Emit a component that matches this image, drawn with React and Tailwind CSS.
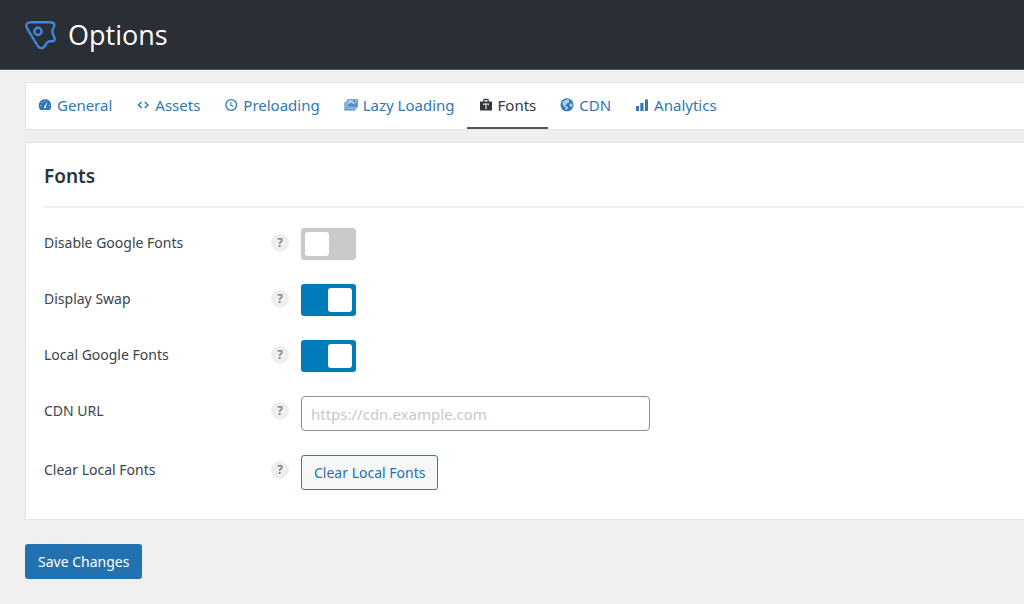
import { useState } from 'react'

const TABS = [
  { id: 'general', label: 'General', icon: GaugeIcon },
  { id: 'assets', label: 'Assets', icon: CodeIcon },
  { id: 'preloading', label: 'Preloading', icon: ClockIcon },
  { id: 'lazy', label: 'Lazy Loading', icon: ImagesIcon },
  { id: 'fonts', label: 'Fonts', icon: FontBagIcon },
  { id: 'cdn', label: 'CDN', icon: GlobeIcon },
  { id: 'analytics', label: 'Analytics', icon: BarsIcon },
]

function Logo() {
  return (
    <svg viewBox="0 0 32 30" className="w-8 h-[30px] shrink-0" fill="none" stroke="#4285e0" strokeWidth="2.4" strokeLinejoin="round" strokeLinecap="round" aria-hidden="true">
      <path d="M6.4 2.2H26.6C29.6 2.2 31 4.2 30 6.6L28.8 9.4C28.1 11.2 28.1 12.2 28.8 13.8L30.4 17.6C31.2 19.8 30.2 21.2 28 21.2H26C24.2 21.2 23.4 21.8 22.4 23.4L20.8 26C19 28.8 15.6 28.8 13.8 26L3.4 8.8C1 5.2 2.8 2.2 6.4 2.2Z" />
      <circle cx="14" cy="11.4" r="3.6" />
    </svg>
  )
}

function Icon({ children }) {
  return (
    <svg viewBox="0 0 14 14" className="w-[14px] h-[14px] shrink-0" fill="currentColor" aria-hidden="true">
      {children}
    </svg>
  )
}

function GaugeIcon() {
  return (
    <Icon>
      <path d="M3 2.6C4 1.7 5.4 1.2 7 1.2S10 1.7 11 2.6C12.4 3.8 13.2 5.6 13.2 7.6C13.2 9.4 12.7 10.9 11.8 12H2.2C1.3 10.9.8 9.4.8 7.6C.8 5.6 1.6 3.8 3 2.6Z" />
      <g fill="#fff">
        <path d="M9.4 3.8L7.8 9.2A.9.9 0 1 1 6.4 8.6Z" />
        <circle cx="6.6" cy="3" r=".5" />
        <circle cx="3.8" cy="4.5" r=".5" />
        <circle cx="2.7" cy="7.6" r=".5" />
        <circle cx="11.3" cy="7.6" r=".5" />
      </g>
    </Icon>
  )
}

function CodeIcon() {
  return (
    <Icon>
      <path d="M5.6 4L2.4 7L5.6 10M8.8 4L12 7L8.8 10" fill="none" stroke="currentColor" strokeWidth="1.5" />
    </Icon>
  )
}

function ClockIcon() {
  return (
    <Icon>
      <g fill="none" stroke="currentColor" strokeWidth="1.3">
        <circle cx="7.2" cy="7" r="5.4" />
        <path d="M6.8 3.8V7.2L9.4 8.6" strokeWidth="1.1" />
      </g>
    </Icon>
  )
}

function ImagesIcon() {
  return (
    <Icon>
      <path d="M3.2 1.2H13.8V9.2H12.6V10.8H11.4V12.4H.4V4.6H1.8V2.9H3.2Z" opacity=".85" />
      <path d="M1.8 4.8V10.8H11.2M3.2 3V9.2H12.4" fill="none" stroke="#fff" strokeWidth=".5" />
      <path d="M4.2 2.2H12.8V4.2L9.8 6.2L7.2 4.6L4.2 6.4Z" fill="#fff" opacity=".6" />
      <circle cx="10.4" cy="3.5" r="1" />
    </Icon>
  )
}

function FontBagIcon() {
  return (
    <Icon>
      <path d="M4.2 3.6V2.2Q4.2.8 5.6.8H8.4Q9.8.8 9.8 2.2V3.6H13V12.6H1V3.6ZM5.5 3.6H8.5V2H5.5Z" fillRule="evenodd" />
      <path d="M4.2 5.6H9.8V7.3H9.2L8.8 6.5H7.5V10.3L8.3 10.8H5.7L6.5 10.3V6.5H5.2L4.8 7.3H4.2Z" fill="#fff" />
    </Icon>
  )
}

function GlobeIcon() {
  return (
    <Icon>
      <circle cx="7" cy="6.8" r="6.5" />
      <path d="M7.3 1.2L9.6 1.8L8.7 3L9.5 3.8L8 5.2L6.4 5.4L6.8 6.8L5 7L6 8.2L7.5 8.4L8 9.6L6.6 12.3L5.6 12L5.2 9.4L3 7.4L2.4 5L4.3 2.4Z" fill="#fff" opacity=".65" />
      <path d="M10.3 5.2L12.3 5.8L12.4 7.6L10.9 9.8L10 8L9.3 6.6Z" fill="#fff" opacity=".65" />
    </Icon>
  )
}

function BarsIcon() {
  return (
    <Icon>
      <path d="M1 8H4V13H1ZM5.3 5H8.5V13H5.3ZM10 1.4H13V13H10Z" />
    </Icon>
  )
}

function Tab({ tab, active, onSelect }) {
  const TabIcon = tab.icon
  return (
    <a
      href={`#${tab.id}`}
      aria-current={active ? 'page' : undefined}
      onClick={() => onSelect(tab.id)}
      className={`flex items-center gap-[5px] px-3 border-b-2 text-[15px] leading-5 whitespace-nowrap ${
        active ? 'border-[#55555f] text-[#32373c]' : 'border-transparent text-[#2f78b7]'
      }`}
    >
      <TabIcon />
      {tab.label}
    </a>
  )
}

function Row({ id, label, children }) {
  return (
    <div className="flex items-start">
      <div className="flex items-center w-[257px] h-[30px] shrink-0">
        <label htmlFor={id} className="w-[227px] text-sm leading-5">{label}</label>
        <button
          type="button"
          aria-label={`Help: ${label}`}
          className="size-[18px] rounded-full bg-[#eeeeee] text-[#777777] text-xs leading-[18px] font-semibold text-center"
        >
          ?
        </button>
      </div>
      {children}
    </div>
  )
}

function Toggle({ id, defaultChecked }) {
  return (
    <span className="relative w-[55px] h-8">
      <input
        id={id}
        type="checkbox"
        defaultChecked={defaultChecked}
        className="peer appearance-none block w-full h-full rounded-[3px] bg-[#cacaca] checked:bg-[#007cba] cursor-pointer"
      />
      <span className="absolute left-1 top-1 size-6 rounded-[3px] bg-white pointer-events-none peer-checked:left-[27px]" />
    </span>
  )
}

export default function App() {
  const [activeTab, setActiveTab] = useState('fonts')
  const [cdnUrl, setCdnUrl] = useState('')

  return (
    <div className="min-h-screen overflow-x-hidden bg-[#efefef] text-[#3c434a] font-['Noto_Sans',sans-serif]">
      {/* Header */}
      <header className="flex items-center gap-3 h-[70px] px-6 bg-[#2a2e35] border-b border-[#55585d]">
        <Logo />
        <h1 className="text-[27px] leading-9 text-white font-['Open_Sans',sans-serif]">Options</h1>
      </header>

      <main className="pl-[25px] pt-3 pb-6">
        {/* Tabs */}
        <nav className="flex h-12 bg-white border border-r-0 border-[#e2e4e7]">
          {TABS.map((tab) => (
            <Tab key={tab.id} tab={tab} active={tab.id === activeTab} onSelect={setActiveTab} />
          ))}
        </nav>

        {/* Settings */}
        <form onSubmit={(e) => e.preventDefault()}>
          <section className="mt-3 pl-[18px] pb-[29px] bg-white border border-r-0 border-[#e2e4e7]">
            <h2 className="pt-[19px] pb-4 h-[65px] border-b-2 border-[#eeeeee] text-[19px] leading-7 font-semibold text-[#2c3338]">
              Fonts
            </h2>
            <div className="flex flex-col gap-6 pt-5">
              <Row id="disable-google" label="Disable Google Fonts">
                <Toggle id="disable-google" />
              </Row>
              <Row id="display-swap" label="Display Swap">
                <Toggle id="display-swap" defaultChecked />
              </Row>
              <Row id="local-google" label="Local Google Fonts">
                <Toggle id="local-google" defaultChecked />
              </Row>
              <Row id="cdn-url" label="CDN URL">
                <input
                  id="cdn-url"
                  type="url"
                  value={cdnUrl}
                  onChange={(e) => setCdnUrl(e.target.value)}
                  placeholder="https://cdn.example.com"
                  className="w-[349px] h-[35px] px-[9px] rounded border border-[#8c8f94] bg-white text-[15px] placeholder:text-[#c8c8c8]"
                />
              </Row>
              <Row id="clear-fonts" label="Clear Local Fonts">
                <button
                  id="clear-fonts"
                  type="button"
                  className="h-[35px] px-3 rounded-[3px] border border-[#2f7dbf] bg-[#f6f7f7] text-sm text-[#2271b1]"
                >
                  Clear Local Fonts
                </button>
              </Row>
            </div>
          </section>

          <button type="submit" className="mt-6 h-[35px] px-[13px] rounded-[3px] bg-[#2271b1] text-sm text-white">
            Save Changes
          </button>
        </form>
      </main>
    </div>
  )
}
